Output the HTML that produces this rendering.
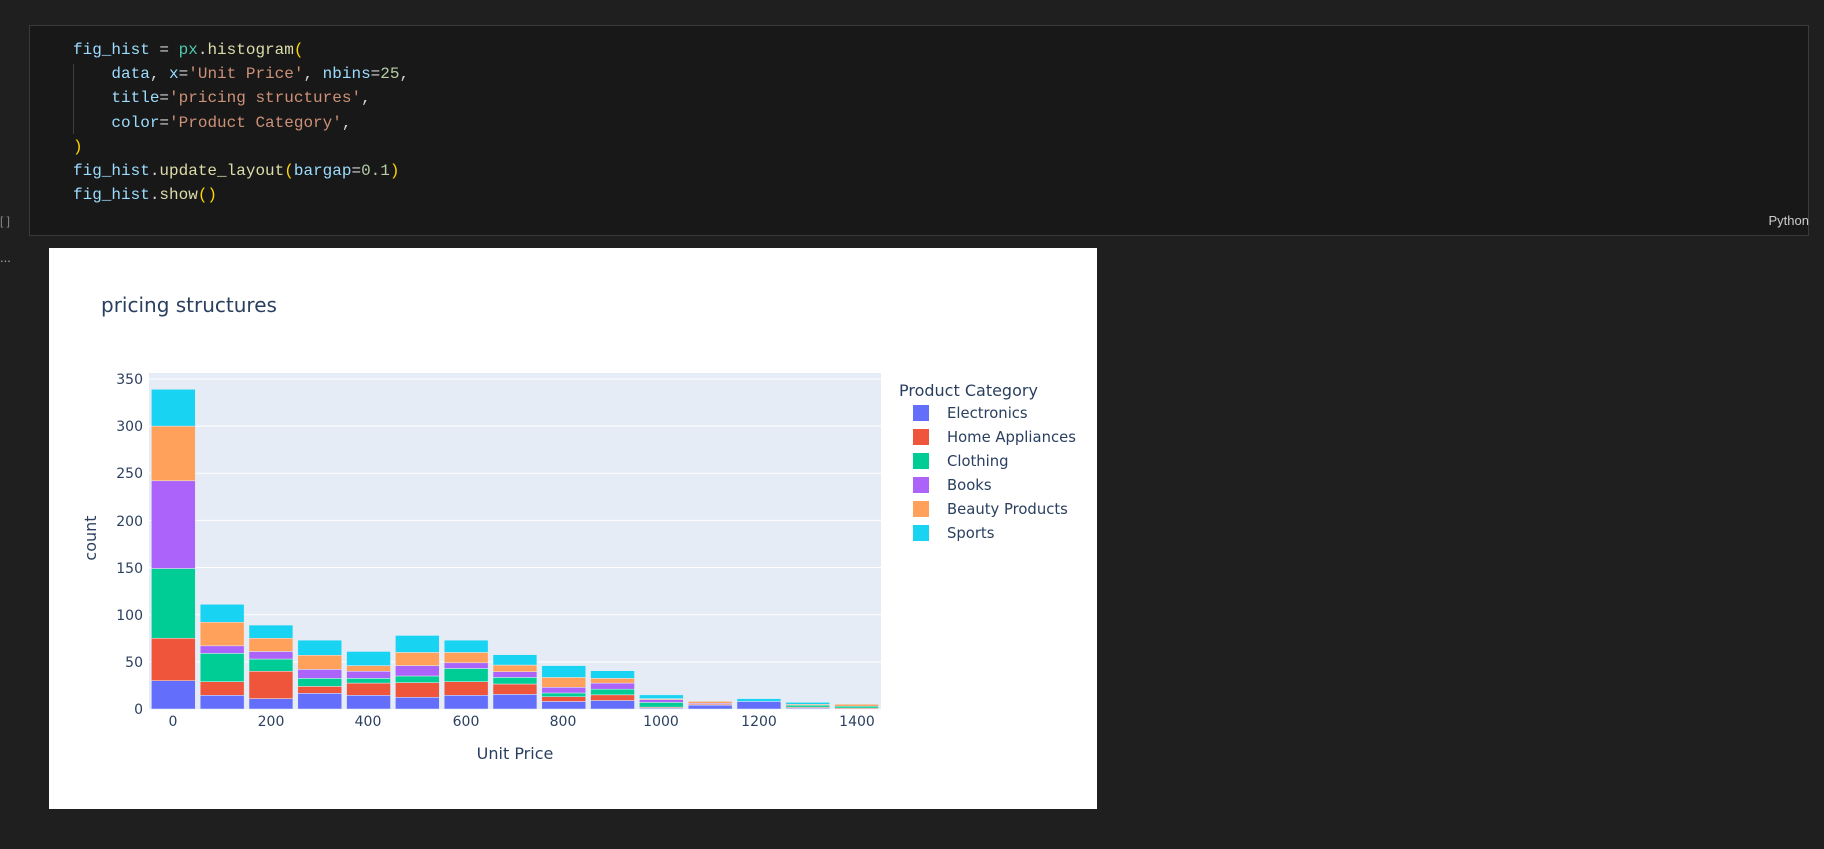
<!DOCTYPE html>
<html><head><meta charset="utf-8"><style>
body{margin:0;width:1824px;height:849px;background:#1f1f1f;overflow:hidden;position:relative;font-family:"Liberation Sans",sans-serif}
.cell{position:absolute;left:29px;top:25px;width:1780px;height:211px;background:#181818;border:1px solid #3a3a3a;box-sizing:border-box}
.code{position:absolute;left:73px;top:38px;font-family:"Liberation Mono",monospace;font-size:16px;line-height:24.2px;color:#d4d4d4;white-space:pre}
.v{color:#9cdcfe}.f{color:#dcdcaa}.c{color:#4ec9b0}.s{color:#ce9178}.n{color:#b5cea8}.p{color:#ffd700}
.guide{position:absolute;left:73px;top:64px;width:1px;height:70px;background:#404040}
.py{position:absolute;right:15px;top:213px;font-size:13px;color:#cccccc}
.br{position:absolute;left:0;top:214px;font-size:12px;color:#888}
.dots{position:absolute;left:0;top:250px;font-size:13px;color:#aaa}
.out{position:absolute;left:49px;top:248px;width:1048px;height:561px;background:#fff}
svg text{font-family:"DejaVu Sans",sans-serif;fill:#2a3f5f}
</style></head><body>
<div class="cell"></div>
<div class="guide"></div>
<div class="code"><span class="v">fig_hist</span> = <span class="c">px</span>.<span class="f">histogram</span><span class="p">(</span>
    <span class="v">data</span>, <span class="v">x</span>=<span class="s">'Unit Price'</span>, <span class="v">nbins</span>=<span class="n">25</span>,
    <span class="v">title</span>=<span class="s">'pricing structures'</span>,
    <span class="v">color</span>=<span class="s">'Product Category'</span>,
<span class="p">)</span>
<span class="v">fig_hist</span>.<span class="f">update_layout</span><span class="p">(</span><span class="v">bargap</span>=<span class="n">0.1</span><span class="p">)</span>
<span class="v">fig_hist</span>.<span class="f">show</span><span class="p">()</span></div>
<div class="py">Python</div>
<div class="br">[ ]</div>
<div class="dots">...</div>
<div class="out"></div>
<svg id="ch" width="1824" height="849" style="position:absolute;left:0;top:0">
<rect x="149" y="373" width="732" height="336" fill="#E5ECF6"/>
<g id="grid" stroke="#fff" stroke-width="1"></g>
<g id="bars"></g>
<text x="101" y="312" font-size="20">pricing structures</text>
<g font-size="14" text-anchor="end">
<text x="143" y="714">0</text><text x="143" y="667">50</text><text x="143" y="620">100</text><text x="143" y="573">150</text><text x="143" y="526">200</text><text x="143" y="478">250</text><text x="143" y="431">300</text><text x="143" y="384">350</text>
</g>
<g font-size="14" text-anchor="middle">
<text x="173" y="726">0</text><text x="271" y="726">200</text><text x="368" y="726">400</text><text x="466" y="726">600</text><text x="563" y="726">800</text><text x="661" y="726">1000</text><text x="759" y="726">1200</text><text x="857" y="726">1400</text>
</g>
<text x="515" y="759" font-size="16" text-anchor="middle">Unit Price</text>
<text transform="translate(96,538) rotate(-90)" font-size="16" text-anchor="middle">count</text>
<text x="899" y="396" font-size="16">Product Category</text>
<g font-size="14.8">
<rect x="913" y="405" width="16" height="16" fill="#636efa"/><text x="947" y="418">Electronics</text>
<rect x="913" y="429" width="16" height="16" fill="#EF553B"/><text x="947" y="442">Home Appliances</text>
<rect x="913" y="453" width="16" height="16" fill="#00cc96"/><text x="947" y="466">Clothing</text>
<rect x="913" y="477" width="16" height="16" fill="#ab63fa"/><text x="947" y="490">Books</text>
<rect x="913" y="501" width="16" height="16" fill="#FFA15A"/><text x="947" y="514">Beauty Products</text>
<rect x="913" y="525" width="16" height="16" fill="#19d3f3"/><text x="947" y="538">Sports</text>
</g>
</svg>
<script>
var ns="http://www.w3.org/2000/svg";
var y0=709,k=0.943;
var g=document.getElementById('grid');
for(var i=1;i<=7;i++){var l=document.createElementNS(ns,'line');var y=y0-50*i*k;l.setAttribute('x1',149);l.setAttribute('x2',881);l.setAttribute('y1',y);l.setAttribute('y2',y);g.appendChild(l);}
var cols=["#636efa","#EF553B","#00cc96","#ab63fa","#FFA15A","#19d3f3"];
var d=[[30,75,149,242,300,339],[14.5,29,59,67,92,111],[11,40,53,61,75,89],[16.6,24,32.5,42,57,73],[14.5,27.5,32.5,40,46,61],[12.4,28,35,46,60,78],[14.5,29,43,49,60,73],[15.5,26.5,33.5,39.5,46.6,57.6],[8,13,17,23,33.5,46],[9,15,21,27.5,32.5,40.6],[1,2,7,10,11,15],[4,5,5,6,8,8],[8,8,8,8,8,11],[1,2,4,4,5,7],[0,1,3,3,5,5]];
var b=document.getElementById('bars');var w=48.8;
d.forEach(function(c,i){var prev=0;c.forEach(function(v,j){if(v>prev){var r=document.createElementNS(ns,'rect');r.setAttribute('x',149+i*w+2.4);r.setAttribute('width',w*0.9);r.setAttribute('y',y0-v*k);r.setAttribute('height',(v-prev)*k);r.setAttribute('fill',cols[j]);r.setAttribute('stroke','#E5ECF6');r.setAttribute('stroke-width','0.5');b.appendChild(r);}prev=Math.max(prev,v);});});
</script>
</body></html>
